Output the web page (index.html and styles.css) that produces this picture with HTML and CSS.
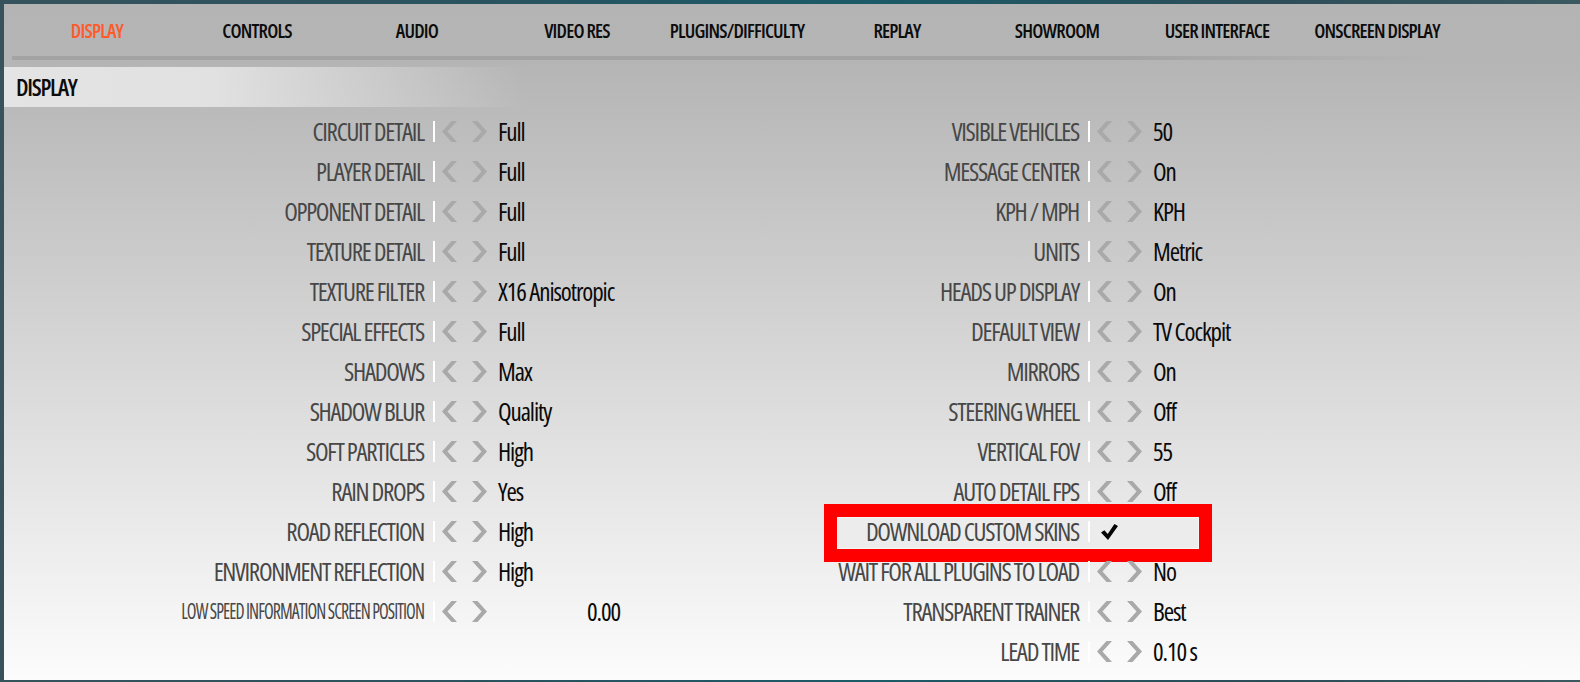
FILE: index.html
```html
<!DOCTYPE html>
<html lang="en">
<head>
    <meta charset="UTF-8">
    <meta name="viewport" content="width=device-width, initial-scale=1.0">
    <title>Display settings</title>
    <link rel="stylesheet" href="styles.css">
</head>
<body>
    <!-- shared arrow shapes -->
    <svg class="defs" width="0" height="0">
        <symbol id="chev-l" viewBox="0 0 15 21"><polygon points="9.5,0 15,0 5.5,10.5 15,21 9.5,21 0,10.5"/></symbol>
        <symbol id="chev-r" viewBox="0 0 15 21"><polygon points="0,0 5.5,0 15,10.5 5.5,21 0,21 9.5,10.5"/></symbol>
    </svg>

    <div class="panel">
        <nav class="tabs">
            <span class="tab active">DISPLAY</span>
            <span class="tab">CONTROLS</span>
            <span class="tab">AUDIO</span>
            <span class="tab">VIDEO RES</span>
            <span class="tab">PLUGINS/DIFFICULTY</span>
            <span class="tab">REPLAY</span>
            <span class="tab">SHOWROOM</span>
            <span class="tab">USER INTERFACE</span>
            <span class="tab">ONSCREEN DISPLAY</span>
        </nav>
        <div class="tabLine"></div>

        <div class="sectionTitle">DISPLAY</div>

        <div class="options">
            <!-- left column -->
            <div class="col">
                <div class="row"><span class="label">CIRCUIT DETAIL</span><i class="sep"></i><span class="arrows"><svg><use href="#chev-l"/></svg><svg><use href="#chev-r"/></svg></span><span class="value">Full</span></div>
                <div class="row"><span class="label">PLAYER DETAIL</span><i class="sep"></i><span class="arrows"><svg><use href="#chev-l"/></svg><svg><use href="#chev-r"/></svg></span><span class="value">Full</span></div>
                <div class="row"><span class="label">OPPONENT DETAIL</span><i class="sep"></i><span class="arrows"><svg><use href="#chev-l"/></svg><svg><use href="#chev-r"/></svg></span><span class="value">Full</span></div>
                <div class="row"><span class="label">TEXTURE DETAIL</span><i class="sep"></i><span class="arrows"><svg><use href="#chev-l"/></svg><svg><use href="#chev-r"/></svg></span><span class="value">Full</span></div>
                <div class="row"><span class="label">TEXTURE FILTER</span><i class="sep"></i><span class="arrows"><svg><use href="#chev-l"/></svg><svg><use href="#chev-r"/></svg></span><span class="value">X16 Anisotropic</span></div>
                <div class="row"><span class="label">SPECIAL EFFECTS</span><i class="sep"></i><span class="arrows"><svg><use href="#chev-l"/></svg><svg><use href="#chev-r"/></svg></span><span class="value">Full</span></div>
                <div class="row"><span class="label">SHADOWS</span><i class="sep"></i><span class="arrows"><svg><use href="#chev-l"/></svg><svg><use href="#chev-r"/></svg></span><span class="value">Max</span></div>
                <div class="row"><span class="label">SHADOW BLUR</span><i class="sep"></i><span class="arrows"><svg><use href="#chev-l"/></svg><svg><use href="#chev-r"/></svg></span><span class="value">Quality</span></div>
                <div class="row"><span class="label">SOFT PARTICLES</span><i class="sep"></i><span class="arrows"><svg><use href="#chev-l"/></svg><svg><use href="#chev-r"/></svg></span><span class="value">High</span></div>
                <div class="row"><span class="label">RAIN DROPS</span><i class="sep"></i><span class="arrows"><svg><use href="#chev-l"/></svg><svg><use href="#chev-r"/></svg></span><span class="value">Yes</span></div>
                <div class="row"><span class="label">ROAD REFLECTION</span><i class="sep"></i><span class="arrows"><svg><use href="#chev-l"/></svg><svg><use href="#chev-r"/></svg></span><span class="value">High</span></div>
                <div class="row"><span class="label">ENVIRONMENT REFLECTION</span><i class="sep"></i><span class="arrows"><svg><use href="#chev-l"/></svg><svg><use href="#chev-r"/></svg></span><span class="value">High</span></div>
                <div class="row"><span class="label small">LOW SPEED INFORMATION SCREEN POSITION</span><i class="sep"></i><span class="arrows"><svg><use href="#chev-l"/></svg><svg><use href="#chev-r"/></svg></span><span class="value far">0.00</span></div>
            </div>

            <!-- right column -->
            <div class="col">
                <div class="row"><span class="label">VISIBLE VEHICLES</span><i class="sep"></i><span class="arrows"><svg><use href="#chev-l"/></svg><svg><use href="#chev-r"/></svg></span><span class="value">50</span></div>
                <div class="row"><span class="label">MESSAGE CENTER</span><i class="sep"></i><span class="arrows"><svg><use href="#chev-l"/></svg><svg><use href="#chev-r"/></svg></span><span class="value">On</span></div>
                <div class="row"><span class="label">KPH / MPH</span><i class="sep"></i><span class="arrows"><svg><use href="#chev-l"/></svg><svg><use href="#chev-r"/></svg></span><span class="value">KPH</span></div>
                <div class="row"><span class="label">UNITS</span><i class="sep"></i><span class="arrows"><svg><use href="#chev-l"/></svg><svg><use href="#chev-r"/></svg></span><span class="value">Metric</span></div>
                <div class="row"><span class="label">HEADS UP DISPLAY</span><i class="sep"></i><span class="arrows"><svg><use href="#chev-l"/></svg><svg><use href="#chev-r"/></svg></span><span class="value">On</span></div>
                <div class="row"><span class="label">DEFAULT VIEW</span><i class="sep"></i><span class="arrows"><svg><use href="#chev-l"/></svg><svg><use href="#chev-r"/></svg></span><span class="value">TV Cockpit</span></div>
                <div class="row"><span class="label">MIRRORS</span><i class="sep"></i><span class="arrows"><svg><use href="#chev-l"/></svg><svg><use href="#chev-r"/></svg></span><span class="value">On</span></div>
                <div class="row"><span class="label">STEERING WHEEL</span><i class="sep"></i><span class="arrows"><svg><use href="#chev-l"/></svg><svg><use href="#chev-r"/></svg></span><span class="value">Off</span></div>
                <div class="row"><span class="label">VERTICAL FOV</span><i class="sep"></i><span class="arrows"><svg><use href="#chev-l"/></svg><svg><use href="#chev-r"/></svg></span><span class="value">55</span></div>
                <div class="row"><span class="label">AUTO DETAIL FPS</span><i class="sep"></i><span class="arrows"><svg><use href="#chev-l"/></svg><svg><use href="#chev-r"/></svg></span><span class="value">Off</span></div>
                <div class="row selected">
                    <div class="marker"></div>
                    <span class="label">DOWNLOAD CUSTOM SKINS</span><i class="sep"></i>
                    <svg class="check" viewBox="0 0 17 16"><polygon points="0,8.6 3.4,6.2 6.7,10 13.4,0 17,2 7,16"/></svg>
                </div>
                <div class="row"><span class="label">WAIT FOR ALL PLUGINS TO LOAD</span><i class="sep"></i><span class="arrows"><svg><use href="#chev-l"/></svg><svg><use href="#chev-r"/></svg></span><span class="value">No</span></div>
                <div class="row"><span class="label">TRANSPARENT TRAINER</span><i class="sep"></i><span class="arrows"><svg><use href="#chev-l"/></svg><svg><use href="#chev-r"/></svg></span><span class="value">Best</span></div>
                <div class="row"><span class="label">LEAD TIME</span><i class="sep"></i><span class="arrows"><svg><use href="#chev-l"/></svg><svg><use href="#chev-r"/></svg></span><span class="value">0.10 s</span></div>
            </div>
        </div>
    </div>
</body>
</html>
```
FILE: styles.css
```css
body {
    margin: 0;
    height: 682px;
    box-sizing: border-box;
    padding: 4px 0 2px 4px;
    font-family: "Open Sans", "Liberation Sans", sans-serif;
    font-stretch: 75%;
    background: linear-gradient(to right, #36535d, #2a5360 30%, #1b5a68 55%, #2d4e59 80%, #3a5961);
    overflow: hidden;
}

.defs {
    position: absolute;
}

.panel {
    height: 676px;
    background: linear-gradient(to bottom, #b4b4b4 0, #b5b5b5 60px, #fcfcfc 100%);
}

/* top tabs */
.tabs {
    display: flex;
    height: 52px;
    padding-left: 13px;
}
.tab {
    width: 160px;
    display: flex;
    align-items: center;
    justify-content: center;
    font-size: 19.5px;
    font-weight: 600;
    letter-spacing: -0.8px;
    color: #0c0c0c;
}
.tab.active {
    color: #ff5a2c;
}
.tabLine {
    height: 4px;
    margin-left: 8px;
    width: 1420px;
    background: linear-gradient(to right, #a3a3a3 0, #a3a3a3 78%, rgba(163, 163, 163, 0) 100%);
}

.sectionTitle {
    margin-top: 7px;
    height: 40px;
    display: flex;
    align-items: center;
    padding-left: 12px;
    font-size: 23.5px;
    font-weight: 600;
    letter-spacing: -1.3px;
    color: #0c0c0c;
    background: linear-gradient(to right, #e4e4e4 0, #e1e1e1 210px, rgba(225, 225, 225, 0) 520px);
}

/* option rows */
.options {
    display: flex;
    margin-top: 4px;
}
.col {
    width: 655px;
}
.row {
    position: relative;
    height: 40px;
    display: flex;
    align-items: center;
}
.label {
    width: 420px;
    flex: none;
    text-align: right;
    font-size: 25px;
    font-weight: 500;
    letter-spacing: -1.3px;
    color: #474747;
    white-space: nowrap;
    position: relative;
}
.label.small {
    font-size: 21px;
    letter-spacing: -1.1px;
    transform: scaleX(0.85);
    transform-origin: right center;
}
.sep {
    width: 2px;
    height: 21px;
    margin-left: 9px;
    background: #fff;
    position: relative;
}
.arrows {
    display: flex;
    gap: 15px;
    margin-left: 7px;
}
.arrows svg {
    width: 15px;
    height: 21px;
    fill: #a9a9a9;
}
.value {
    margin-left: 11px;
    font-size: 25px;
    font-weight: 500;
    letter-spacing: -1.1px;
    color: #0a0a0a;
    white-space: nowrap;
}
.value.far {
    margin-left: 100px;
}

/* selected row with red marker */
.marker {
    position: absolute;
    left: 178px;
    top: 6px;
    width: 362px;
    height: 32px;
    box-sizing: border-box;
    background: #ececec;
    border: 1px solid #f6f6f6;
    outline: 13px solid #ff0000;
}
.check {
    width: 17px;
    height: 16px;
    margin-left: 11px;
    margin-top: 2px;
    fill: #050505;
    position: relative;
}
```
